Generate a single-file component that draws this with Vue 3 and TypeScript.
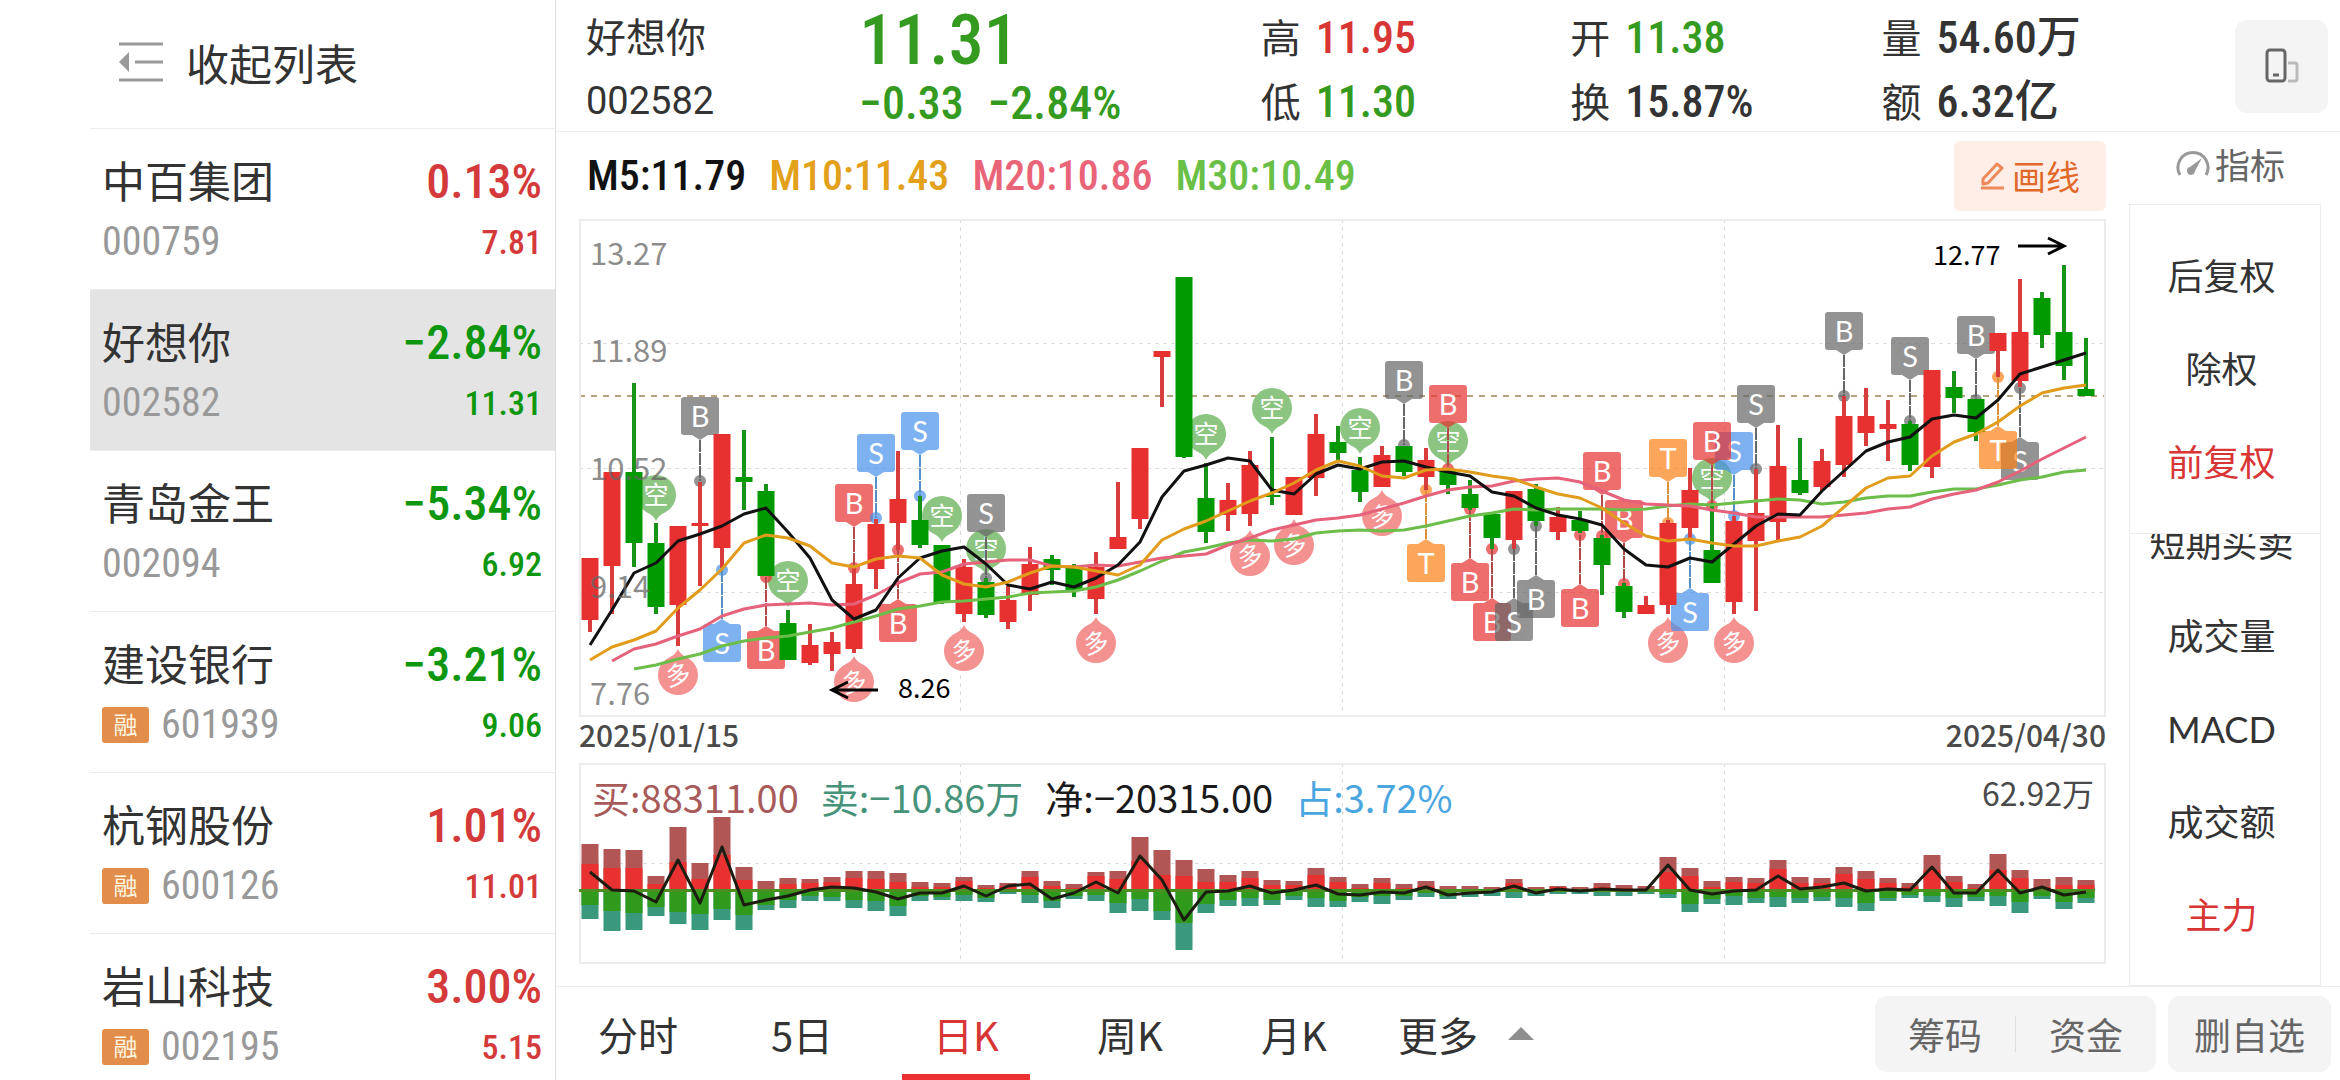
<script setup lang="ts">
import { ref } from 'vue'

interface Stock { name: string; code: string; change: string; price: string; up: boolean; margin?: boolean }
interface Quote { label: string; value: string; tone: string }

const stocks: Stock[] = [
  { name: '中百集团', code: '000759', change: '0.13%', price: '7.81', up: true },
  { name: '好想你', code: '002582', change: '−2.84%', price: '11.31', up: false },
  { name: '青岛金王', code: '002094', change: '−5.34%', price: '6.92', up: false },
  { name: '建设银行', code: '601939', change: '−3.21%', price: '9.06', up: false, margin: true },
  { name: '杭钢股份', code: '600126', change: '1.01%', price: '11.01', up: true, margin: true },
  { name: '岩山科技', code: '002195', change: '3.00%', price: '5.15', up: true, margin: true },
]
const selected = ref('002582')

const quotes: Quote[][] = [
  [{ label: '高', value: '11.95', tone: 'rise' }, { label: '低', value: '11.30', tone: 'drop' }],
  [{ label: '开', value: '11.38', tone: 'drop' }, { label: '换', value: '15.87%', tone: '' }],
  [{ label: '量', value: '54.60万', tone: '' }, { label: '额', value: '6.32亿', tone: '' }],
]

const averages = [
  { text: 'M5:11.79', color: '#111111' },
  { text: 'M10:11.43', color: '#e3a01b' },
  { text: 'M20:10.86', color: '#ea6478' },
  { text: 'M30:10.49', color: '#6abf47' },
]

const adjustModes = ['后复权', '除权', '前复权']
const adjust = ref('前复权')
const indicators = ['短期买卖', '成交量', 'MACD', '成交额', '主力']
const indicator = ref('主力')

const periods = ['分时', '5日', '日K', '周K', '月K']
const period = ref('日K')

const flows = [
  { text: '买:88311.00', color: '#a85a5a' },
  { text: '卖:−10.86万', color: '#46937a' },
  { text: '净:−20315.00', color: '#1a1a1a' },
  { text: '占:3.72%', color: '#4aa6df' },
]

const px = (i: number): number => 11 + 22 * i

// One candle per trading day: direction, high, body top, body bottom, low
type Candle = [number, number, number, number, number]
const candles: Candle[] = [
  [1, 339, 339, 401, 413], [1, 253, 253, 347, 395], [0, 164, 253, 324, 348], [0, 304, 324, 388, 395],
  [1, 307, 307, 386, 427], [1, 263, 304, 307, 367], [1, 215, 215, 329, 349], [0, 211, 258, 263, 291],
  [0, 265, 272, 357, 357], [0, 391, 404, 441, 441], [1, 405, 426, 444, 446], [1, 413, 423, 435, 452],
  [1, 349, 365, 430, 434], [1, 300, 305, 350, 370], [1, 232, 280, 304, 331], [0, 277, 301, 326, 329],
  [0, 326, 326, 383, 385], [1, 340, 348, 395, 403], [0, 359, 363, 396, 399], [1, 367, 381, 403, 410],
  [1, 328, 345, 376, 392], [0, 336, 340, 351, 366], [0, 345, 349, 372, 378], [1, 333, 348, 380, 395],
  [1, 263, 318, 330, 330], [1, 229, 229, 300, 310], [1, 132, 132, 138, 188], [0, 58, 58, 238, 239],
  [0, 244, 279, 313, 324], [1, 264, 281, 296, 312], [1, 232, 246, 295, 307], [0, 218, 276, 278, 286],
  [1, 258, 258, 296, 296], [1, 195, 215, 259, 277], [0, 207, 223, 234, 241], [0, 238, 251, 273, 283],
  [1, 227, 236, 268, 268], [0, 227, 227, 253, 257], [1, 229, 241, 258, 271], [0, 249, 251, 266, 275],
  [0, 261, 275, 289, 291], [0, 295, 295, 319, 330], [1, 272, 272, 321, 330], [0, 265, 270, 302, 307],
  [1, 288, 298, 313, 321], [0, 292, 301, 312, 314], [0, 316, 319, 346, 376], [0, 364, 367, 393, 399],
  [1, 377, 386, 395, 395], [1, 301, 304, 386, 395], [1, 249, 271, 309, 319], [0, 284, 331, 364, 364],
  [1, 297, 302, 383, 395], [1, 250, 294, 322, 392], [1, 206, 247, 303, 322], [0, 219, 261, 274, 276],
  [1, 230, 242, 268, 272], [1, 177, 197, 246, 258], [1, 169, 197, 214, 227], [1, 181, 205, 210, 242],
  [0, 202, 205, 246, 252], [1, 151, 151, 248, 259], [0, 152, 168, 179, 194], [0, 180, 180, 213, 222],
  [1, 114, 114, 132, 158], [1, 60, 113, 162, 168], [0, 73, 79, 116, 129], [0, 46, 113, 147, 161],
  [0, 119, 170, 177, 177],
]

const points = (ys: number[], first = 0): string => ys.map((y, k) => `${px(first + k)},${y}`).join(' ')

const lines = [
  {
    color: '#6cbd4a',
    d: points([450, 446, 440, 435, 427, 422, 419, 417, 413, 409, 403, 397, 390, 387, 383, 382, 380, 378, 374, 373, 372, 368, 361, 352, 342, 333, 329, 324, 321, 322, 320, 314, 312, 311, 312, 311, 307, 302, 297, 294, 290, 291, 290, 290, 290, 291, 290, 287, 285, 286, 284, 282, 280, 281, 285, 283, 279, 277, 277, 273, 270, 270, 266, 261, 258, 253, 251], 2),
  },
  {
    color: '#e6617a',
    d: points([442, 430, 425, 417, 410, 397, 390, 386, 385, 384, 386, 385, 376, 364, 355, 353, 345, 343, 341, 341, 347, 348, 346, 347, 343, 339, 337, 335, 326, 319, 311, 306, 301, 299, 296, 290, 284, 277, 271, 268, 267, 262, 260, 259, 263, 272, 281, 285, 286, 287, 291, 294, 298, 298, 298, 298, 296, 294, 290, 288, 280, 275, 271, 263, 252, 240, 229, 218], 1),
  },
  {
    color: '#111111',
    d: points([426, 391, 354, 344, 322, 315, 307, 295, 289, 313, 339, 381, 400, 391, 359, 339, 332, 328, 345, 366, 370, 363, 368, 359, 346, 323, 278, 252, 246, 239, 242, 271, 275, 255, 246, 250, 243, 242, 248, 253, 257, 273, 277, 289, 296, 300, 306, 330, 346, 348, 339, 343, 325, 307, 295, 296, 272, 252, 232, 223, 218, 200, 196, 199, 181, 155, 148, 141, 134]),
  },
  {
    color: '#e29c1c',
    d: points([441, 428, 421, 412, 389, 371, 350, 324, 316, 319, 327, 344, 348, 340, 337, 339, 356, 365, 368, 363, 354, 347, 348, 352, 356, 346, 321, 310, 302, 292, 282, 274, 264, 251, 242, 247, 257, 259, 251, 250, 253, 257, 260, 268, 275, 279, 289, 304, 317, 322, 320, 324, 327, 327, 322, 318, 307, 288, 269, 259, 257, 237, 223, 215, 203, 187, 174, 169, 166]),
  },
]

// Trade tags hang on a stem above or below the day's marker dot
type Tone = 'gray' | 'red' | 'blue' | 'orange'
interface Tag { i: number; t: string; tone: Tone; dot: number; above: boolean }
const tag = (i: number, t: string, tone: Tone, dot: number, above = true): Tag => ({ i, t, tone, dot, above })
const fills: Record<Tone, string> = { gray: '#666666', red: '#e73030', blue: '#4891ea', orange: '#fc8118' }
const stems: Record<Tone, string> = { gray: '#666666', red: '#b34848', blue: '#5590c8', orange: '#dc9238' }
const tags: Tag[] = [
  tag(5, 'B', 'gray', 262), tag(6, 'S', 'blue', 351, false), tag(8, 'B', 'red', 358, false),
  tag(12, 'B', 'red', 349), tag(13, 'S', 'blue', 299), tag(14, 'B', 'red', 331, false),
  tag(15, 'S', 'blue', 277), tag(18, 'S', 'gray', 359), tag(37, 'B', 'gray', 226),
  tag(38, 'T', 'orange', 271, false), tag(39, 'B', 'red', 250), tag(40, 'B', 'red', 290, false),
  tag(41, 'B', 'red', 330, false), tag(42, 'S', 'gray', 330, false), tag(43, 'B', 'gray', 307, false),
  tag(45, 'B', 'red', 316, false), tag(46, 'B', 'red', 317), tag(47, 'B', 'red', 365),
  tag(49, 'T', 'orange', 304), tag(50, 'S', 'blue', 320, false), tag(52, 'S', 'blue', 297),
  tag(51, 'B', 'red', 287), tag(53, 'S', 'gray', 250), tag(57, 'B', 'gray', 177),
  tag(60, 'S', 'gray', 202), tag(63, 'B', 'gray', 181), tag(65, 'S', 'gray', 169, false),
  tag(64, 'T', 'orange', 158, false),
]
const tagTop = (g: Tag): number => (g.above ? g.dot - 84 : g.dot + 54)
const tip = (g: Tag): string => {
  const x = px(g.i)
  return g.above
    ? `M${x - 8} ${g.dot - 46}h16l-8 5z`
    : `M${x - 8} ${g.dot + 54}h16l-8 -5z`
}

const bears: [number, number][] = [[3, 276], [9, 362], [16, 297], [18, 330], [28, 215], [31, 189], [35, 209], [39, 222], [51, 259]]
const bulls: [number, number][] = [[4, 456], [12, 463], [17, 432], [23, 424], [30, 337], [32, 326], [36, 297], [49, 424], [52, 424]]

// Money flow per day: total in, main in, main out, total out
const money: [number, number, number, number][] = [
  [46, 26, 15, 29], [41, 22, 21, 41], [40, 22, 23, 40], [14, 6, 17, 26], [63, 28, 22, 34], [27, 11, 24, 40],
  [73, 35, 19, 30], [23, 10, 25, 40], [9, 1, 15, 20], [12, 6, 10, 18], [11, 7, 6, 11], [13, 8, 7, 11],
  [19, 12, 10, 18], [19, 11, 11, 21], [17, 8, 16, 26], [8, 3, 6, 11], [7, 3, 7, 10], [13, 9, 5, 11],
  [5, 2, 8, 12], [7, 4, 2, 4], [19, 13, 5, 13], [9, 4, 11, 18], [6, 2, 6, 9], [18, 14, 5, 11],
  [19, 11, 13, 23], [53, 29, 9, 21], [40, 15, 21, 30], [30, 14, 33, 60], [21, 8, 14, 23], [15, 8, 10, 16],
  [19, 12, 8, 16], [10, 5, 10, 15], [9, 5, 6, 10], [22, 15, 8, 17], [13, 8, 11, 17], [6, 2, 7, 12],
  [12, 7, 6, 14], [6, 2, 6, 10], [9, 4, 3, 7], [4, 1, 6, 9], [4, 1, 3, 7], [3, 1, 2, 6],
  [11, 7, 2, 8], [3, 1, 3, 6], [4, 3, 1, 4], [3, 1, 1, 4], [7, 3, 2, 6], [5, 2, 2, 6],
  [4, 1, 1, 4], [33, 18, 4, 8], [22, 14, 14, 22], [9, 3, 9, 14], [13, 8, 6, 15], [12, 7, 8, 13],
  [30, 21, 7, 17], [13, 7, 8, 13], [12, 7, 7, 11], [23, 16, 8, 17], [19, 11, 13, 21], [12, 7, 8, 11],
  [7, 3, 5, 8], [35, 20, 6, 12], [14, 8, 8, 17], [6, 2, 7, 11], [36, 20, 6, 16], [20, 12, 12, 23],
  [11, 3, 6, 9], [13, 5, 12, 19], [10, 5, 8, 13],
]
const net = [18, 0, -1, -12, 30, -13, 43, -15, -10, -6, 0, 3, 2, -2, -9, -3, -3, 4, -6, 4, 6, -9, -3, 8, -3, 34, 10, -30, -2, -1, 4, -3, 0, 5, -4, -5, -2, -3, 3, -5, -3, -2, 4, -3, 1, -1, 1, 0, 0, 25, 0, -4, -1, 0, 14, 1, 3, 7, -1, 1, 0, 23, -3, -3, 20, -3, 3, -5, -2]
const netLine = points(net.map((v) => 127 - v))
</script>

<template>
  <div class="app">
    <aside class="side">
      <button class="collapse" type="button">
        <svg width="44" height="40" viewBox="0 0 44 40" aria-hidden="true">
          <path d="M0 2h44M16 20h28M0 38h44" stroke="#999" stroke-width="3" />
          <path d="M0 20 10 10v20z" fill="#999" />
        </svg>
        <span>收起列表</span>
      </button>
      <a
        v-for="s in stocks" :key="s.code" href="#" class="stock"
        :class="{ active: s.code === selected }" @click.prevent="selected = s.code"
      >
        <span class="line">
          <span class="name">{{ s.name }}</span>
          <span class="change" :class="s.up ? 'up' : 'down'">{{ s.change }}</span>
        </span>
        <span class="line">
          <span class="ident"><i v-if="s.margin" class="badge">融</i><span class="code">{{ s.code }}</span></span>
          <span class="price" :class="s.up ? 'up' : 'down'">{{ s.price }}</span>
        </span>
      </a>
    </aside>

    <main class="main">
      <header class="head">
        <div class="cell">
          <h1 class="title">好想你</h1>
          <span class="symbol">002582</span>
        </div>
        <div class="cell">
          <strong class="last">11.31</strong>
          <span class="delta"><span>−0.33</span><span>−2.84%</span></span>
        </div>
        <dl v-for="(col, c) in quotes" :key="c" class="cell">
          <div v-for="q in col" :key="q.label" class="quote">
            <dt>{{ q.label }}</dt><dd :class="q.tone">{{ q.value }}</dd>
          </div>
        </dl>
        <button class="rotate" type="button" aria-label="竖屏">
          <svg width="34" height="36" viewBox="0 0 34 36" fill="none" aria-hidden="true">
            <rect x="2" y="2" width="18" height="31" rx="3" stroke="#666" stroke-width="3" />
            <path d="M8 27h6" stroke="#666" stroke-width="3" />
            <path d="M23 15h7a2 2 0 0 1 2 2v14a2 2 0 0 1-2 2h-7" stroke="#bbb" stroke-width="3" />
          </svg>
        </button>
      </header>

      <div class="body">
        <section class="charts">
          <div class="averages">
            <span v-for="a in averages" :key="a.text" :style="{ color: a.color }">{{ a.text }}</span>
            <button class="draw" type="button">
              <svg width="25" height="28" viewBox="0 0 25 28" fill="none" stroke="#ee8a5a" stroke-width="3" aria-hidden="true">
                <path d="M3 22v-5L17 2l5 4L8 21z" stroke-linejoin="round" /><path d="M1 26h23" />
              </svg>
              画线
            </button>
          </div>

          <svg class="kline" viewBox="0 0 1527 498">
            <g stroke="#dcdcdc" stroke-width="1" stroke-dasharray="4 4">
              <path d="M0 124.5H1527M0 249.5H1527M0 373.5H1527M381.5 0V498M763.5 0V498M1145.5 0V498" />
            </g>
            <path d="M0 177H1527" stroke="#b5a57f" stroke-width="2" stroke-dasharray="6 6" />
            <rect x="1" y="1" width="1525" height="496" fill="none" stroke="#ebebeb" stroke-width="2" />

            <g v-for="[i, y] in bears" :key="'k' + i">
              <path :d="`M${px(i) - 20} ${y}a20 20 0 1 1 40 0c0 9-6 15-12 18-4 2-6 4-8 8-2-4-4-6-8-8-6-3-12-9-12-18z`" fill="#8bc581" />
              <text :x="px(i)" :y="y + 9" class="pin">空</text>
            </g>
            <g v-for="[i, y] in bulls" :key="'d' + i">
              <path :d="`M${px(i) - 20} ${y}a20 20 0 1 0 40 0c0-9-6-15-12-18-4-2-6-4-8-8-2 4-4 6-8 8-6 3-12 9-12 18z`" fill="#f49191" />
              <text :x="px(i)" :y="y + 9" class="pin" :transform="`rotate(-12 ${px(i)} ${y})`">多</text>
            </g>

            <g v-for="g in tags" :key="'t' + g.i">
              <g opacity="0.7">
                <rect :x="px(g.i) - 19" :y="tagTop(g)" width="38" height="38" rx="3" :fill="fills[g.tone]" />
                <path :d="tip(g)" :fill="fills[g.tone]" />
                <circle :cx="px(g.i)" :cy="g.dot" r="6" :fill="fills[g.tone]" />
              </g>
              <path
                :d="g.above ? `M${px(g.i)} ${g.dot - 41}V${g.dot}` : `M${px(g.i)} ${g.dot}V${g.dot + 49}`"
                :stroke="stems[g.tone]" stroke-width="2" stroke-dasharray="12 1"
              />
              <text :x="px(g.i)" :y="tagTop(g) + 30" class="letter">{{ g.t }}</text>
            </g>

            <g v-for="(c, i) in candles" :key="i" :fill="c[0] ? '#e73030' : '#009a00'">
              <rect :x="px(i) - 2" :y="c[1]" width="4" :height="c[4] - c[1]" :fill="c[0] ? '#d83c3c' : '#179317'" />
              <rect :x="px(i) - 8.5" :y="c[2]" width="17" :height="c[3] - c[2]" />
            </g>

            <polyline v-for="l in lines" :key="l.color" :points="l.d" :stroke="l.color" class="avg" />

            <g class="axis">
              <text x="11" y="46">13.27</text>
              <text x="11" y="143">11.89</text>
              <text x="11" y="261">10.52</text>
              <text x="11" y="379">9.14</text>
              <text x="11" y="486">7.76</text>
            </g>
            <g class="extreme">
              <text x="1354" y="46">12.77</text>
              <text x="319" y="479">8.26</text>
              <path d="M1439 27H1485M1469 19 1485 27 1469 35M299 471H253M269 463 253 471 269 479" />
            </g>
          </svg>

          <div class="dates"><time>2025/01/15</time><time>2025/04/30</time></div>

          <div class="flow">
            <svg viewBox="0 0 1527 201">
              <path d="M0 100.5H1527M381.5 0V201M763.5 0V201M1145.5 0V201" stroke="#dcdcdc" stroke-dasharray="4 4" />
              <rect x="1" y="1" width="1525" height="199" fill="none" stroke="#ebebeb" stroke-width="2" />
              <g v-for="(m, i) in money" :key="i">
                <rect :x="px(i) - 8.5" :y="127 - m[0]" width="17" :height="m[0]" fill="#b15555" />
                <rect :x="px(i) - 8.5" :y="127 - m[1]" width="17" :height="m[1]" fill="#e93131" />
                <rect :x="px(i) - 8.5" y="127" width="17" :height="m[3]" fill="#3a997d" />
                <rect :x="px(i) - 8.5" y="127" width="17" :height="m[2]" fill="#2f9a1c" />
              </g>
              <path d="M0 127.5H1516" stroke="#4b8f22" stroke-width="3" />
              <polyline :points="netLine" stroke="#1c1c10" class="avg" />
            </svg>
            <div class="legend">
              <span v-for="f in flows" :key="f.text" :style="{ color: f.color }">{{ f.text }}</span>
              <span class="peak">62.92万</span>
            </div>
          </div>
        </section>

        <aside class="tools">
          <button class="metric" type="button">
            <svg width="34" height="26" viewBox="0 0 34 26" fill="none" aria-hidden="true">
              <path d="M4 24A15 15 0 1 1 30 24" stroke="#999" stroke-width="3" />
              <path d="M26 7 19 20a4 4 0 1 1-5-4z" fill="#999" />
            </svg>
            指标
          </button>
          <div class="panel">
            <div class="group">
              <button v-for="m in adjustModes" :key="m" type="button" :class="{ on: m === adjust }" @click="adjust = m">{{ m }}</button>
            </div>
            <div class="scroll">
              <button v-for="m in indicators" :key="m" type="button" :class="{ on: m === indicator }" @click="indicator = m">{{ m }}</button>
            </div>
          </div>
        </aside>
      </div>

      <nav class="foot">
        <button v-for="p in periods" :key="p" class="tab" type="button" :class="{ on: p === period }" @click="period = p">{{ p }}</button>
        <button class="more" type="button">
          更多
          <svg width="26" height="13" viewBox="0 0 26 13" aria-hidden="true"><path d="M0 13 13 0l13 13z" fill="#8e8e8e" /></svg>
        </button>
        <div class="pair">
          <button type="button">筹码</button>
          <button type="button">资金</button>
        </div>
        <button class="remove" type="button">删自选</button>
      </nav>
    </main>
  </div>
</template>

<style>
body { background: #fff; }
</style>

<style scoped>
.app {
  --num: 'Roboto Condensed', 'Noto Sans CJK SC', sans-serif;
  --text: 'Noto Sans CJK SC', sans-serif;
  display: flex;
  height: 100vh;
  padding-left: 90px;
  box-sizing: border-box;
  overflow: hidden;
  color: #333;
  font-family: var(--text);
}
.app * { box-sizing: border-box; }
button { border: 0; padding: 0; background: none; color: inherit; font: inherit; cursor: pointer; }

.side { flex: none; width: 466px; border-right: 1px solid #dedede; overflow: hidden; }
.collapse {
  display: flex;
  align-items: center;
  gap: 23px;
  width: 100%;
  height: 129px;
  padding: 0 0 4px 29px;
  border-bottom: 1px solid #ececec;
  font-size: 43px;
  line-height: 64px;
}
.stock {
  display: block;
  height: 161px;
  padding: 23px 13px 0 12px;
  border-bottom: 1px solid #ececec;
  color: inherit;
  text-decoration: none;
}
.stock.active { background: #e4e4e4; }
.line { display: flex; align-items: center; justify-content: space-between; height: 60px; }
.name { font-size: 43px; line-height: 60px; padding-bottom: 6px; }
.change { font: 500 48px/60px var(--num); }
.ident { display: flex; align-items: center; gap: 12px; }
.badge {
  width: 47px;
  height: 36px;
  border-radius: 3px;
  background: #e28e4a;
  color: #fff6e0;
  font: normal 24px/34px var(--text);
  text-align: center;
}
.code { color: #999; font: 400 40px/60px var(--num); }
.price { font: 500 34px/60px var(--num); }
.up { color: #d53a3a; }
.down { color: #0e970e; }
.rise { color: #d83535; }
.drop { color: #349a20; }

.main { flex: 1; min-width: 0; display: flex; flex-direction: column; }
.head {
  display: grid;
  grid-template-columns: 273fr 401fr 309fr 311fr 353fr 93px;
  height: 132px;
  padding: 0 12px 0 30px;
  border-bottom: 1px solid #ececec;
}
.cell { display: flex; flex-direction: column; margin: 0; padding-top: 4px; }
.cell > * { height: 64px; }
.title { margin: 0; font-size: 40px; font-weight: 400; line-height: 62px; }
.symbol { font: 400 38px/66px Roboto, sans-serif; }
.last { color: #349a20; font: 500 70px/72px var(--num); }
.delta { display: flex; gap: 24px; color: #349a20; font: 500 46px/70px var(--num); }
.quote { display: flex; align-items: center; gap: 15px; }
.quote dt { font-size: 40px; line-height: 64px; }
.quote dd { margin: 0; font: 500 44px/64px var(--num); padding-top: 4px; }
.rotate {
  display: flex;
  align-items: center;
  justify-content: center;
  align-self: center;
  height: 93px;
  border-radius: 12px;
  background: #f4f4f4;
}

.body { flex: 1; min-height: 0; display: flex; gap: 23px; padding: 0 19px 0 23px; }
.charts { flex: 1; min-width: 0; display: flex; flex-direction: column; }
.averages { display: flex; align-items: center; gap: 23px; height: 87px; padding-left: 8px; font: 500 42px/60px var(--num); }
.draw {
  display: flex;
  align-items: center;
  justify-content: center;
  gap: 7px;
  width: 152px;
  height: 70px;
  margin-left: auto;
  border-radius: 6px;
  background: #feeee7;
  color: #e0692a;
  font: 400 34px/50px var(--text);
}
.kline, .flow svg { display: block; width: 100%; height: auto; }
.avg { fill: none; stroke-width: 3; stroke-linejoin: round; }
.pin { fill: #fff; font: 400 25px var(--text); text-anchor: middle; }
.letter { fill: #fff; font: 400 29px Lato, sans-serif; text-anchor: middle; }
.axis text { fill: #666; fill-opacity: 0.75; font: 400 31px var(--text); }
.extreme text { fill: #000; font: 400 27px var(--text); }
.extreme path { fill: none; stroke: #000; stroke-width: 3; }
.dates { display: flex; justify-content: space-between; height: 46px; color: #4a4a4a; font: 500 30px/34px var(--text); }
.flow { position: relative; }
.legend { position: absolute; inset: 0 12px auto 13px; display: flex; gap: 22px; font-size: 38px; line-height: 68px; }
.peak { margin-left: auto; color: #4a4a4a; font-size: 32px; line-height: 58px; }

.tools { flex: none; width: 192px; display: flex; flex-direction: column; }
.metric { display: flex; align-items: center; justify-content: center; gap: 5px; height: 72px; padding: 0 0 8px 11px; color: #666; font-size: 35px; line-height: 50px; }
.panel { flex: 1; min-height: 0; display: flex; flex-direction: column; border: 1px solid #ececec; font-size: 36px; }
.panel button { display: block; width: 100%; height: 93px; padding-right: 7px; font-family: Lato, var(--text); line-height: 93px; white-space: nowrap; }
.group { padding: 25px 0 24px; }
.scroll { flex: 1; min-height: 0; overflow: hidden; border-top: 1px solid #ececec; }
.scroll button:first-child { margin-top: -37px; }
.on { color: #d83535; }

.foot { flex: none; display: flex; align-items: center; height: 94px; padding-right: 9px; border-top: 1px solid #ececec; font-size: 40px; line-height: 60px; }
.tab { position: relative; width: 164px; height: 93px; }
.tab.on::after { content: ''; position: absolute; left: 18px; right: 18px; bottom: 0; height: 6px; background: #ec3131; }
.more { display: flex; align-items: center; gap: 30px; margin-left: 22px; }
.pair { display: flex; align-items: center; width: 281px; height: 76px; margin: 0 12px 0 auto; border-radius: 12px; background: #f4f4f4; color: #666; font-size: 37px; }
.pair button { flex: 1; line-height: 36px; }
.pair button + button { border-left: 1px solid #ddd; }
.remove { width: 163px; height: 76px; border-radius: 12px; background: #f4f4f4; color: #666; font-size: 37px; }
</style>
